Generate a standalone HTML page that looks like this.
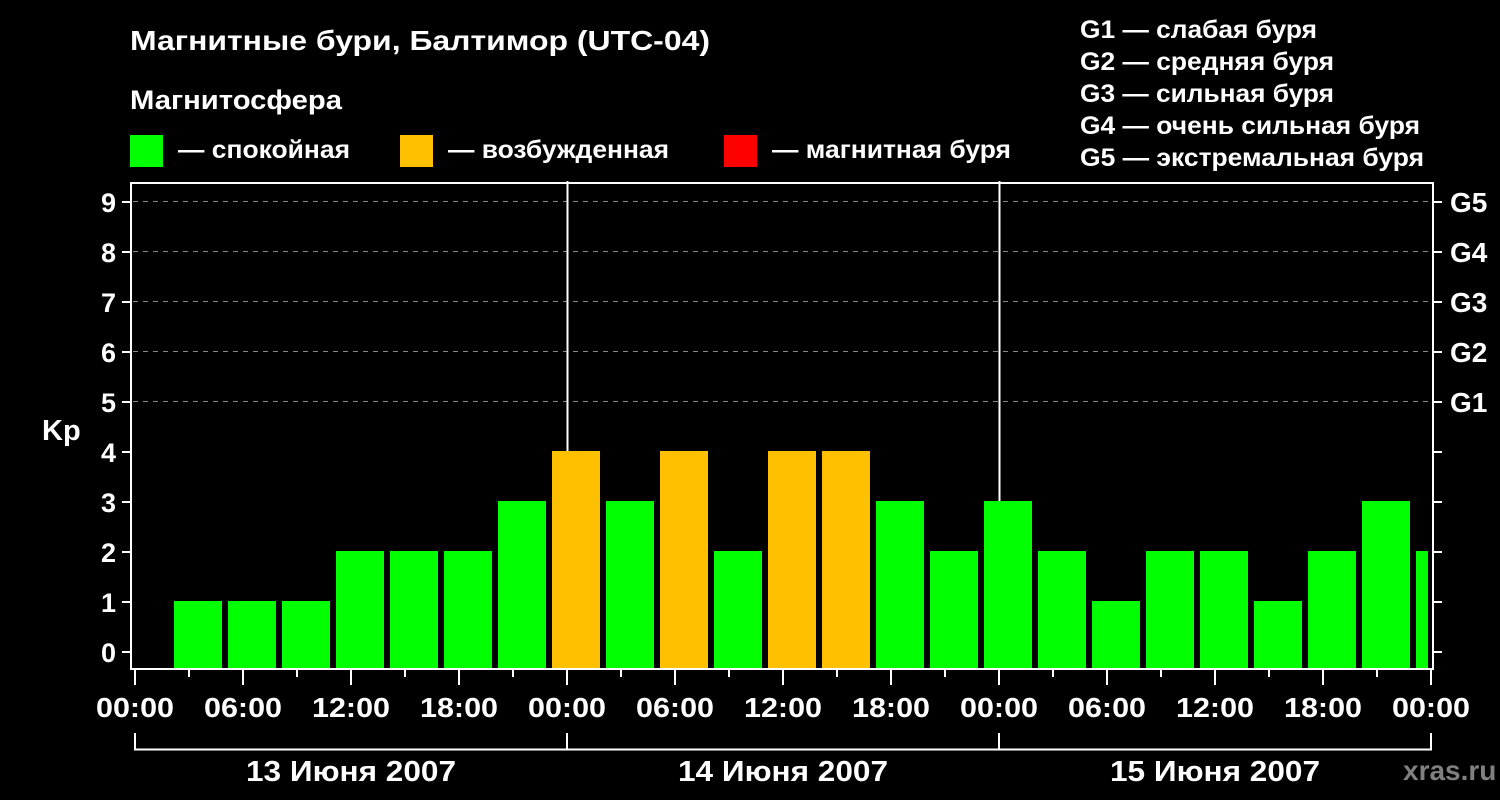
<!DOCTYPE html>
<html><head><meta charset="utf-8"><style>
html,body{margin:0;padding:0;background:#000;}
svg{display:block;}
text{font-family:"Liberation Sans","DejaVu Sans",sans-serif;font-weight:bold;fill:#fff;}
</style></head><body>
<svg width="1500" height="800" viewBox="0 0 1500 800" xmlns="http://www.w3.org/2000/svg">
<rect width="1500" height="800" fill="#000"/>
<text x="130" y="50" font-size="28" textLength="580" lengthAdjust="spacingAndGlyphs">Магнитные бури, Балтимор (UTC-04)</text>
<text x="130" y="109" font-size="27" textLength="212" lengthAdjust="spacingAndGlyphs">Магнитосфера</text>
<rect x="130" y="135" width="33" height="32" fill="#00ff00"/>
<text x="178" y="158" font-size="25" textLength="172" lengthAdjust="spacingAndGlyphs">— спокойная</text>
<rect x="400" y="135" width="33" height="32" fill="#ffc000"/>
<text x="448" y="158" font-size="25" textLength="221" lengthAdjust="spacingAndGlyphs">— возбужденная</text>
<rect x="724" y="135" width="33" height="32" fill="#ff0000"/>
<text x="772" y="158" font-size="25" textLength="239" lengthAdjust="spacingAndGlyphs">— магнитная буря</text>
<g font-size="25">
<text x="1080" y="38" textLength="237" lengthAdjust="spacingAndGlyphs">G1 — слабая буря</text>
<text x="1080" y="70" textLength="254" lengthAdjust="spacingAndGlyphs">G2 — средняя буря</text>
<text x="1080" y="102" textLength="254" lengthAdjust="spacingAndGlyphs">G3 — сильная буря</text>
<text x="1080" y="134" textLength="340" lengthAdjust="spacingAndGlyphs">G4 — очень сильная буря</text>
<text x="1080" y="166" textLength="344" lengthAdjust="spacingAndGlyphs">G5 — экстремальная буря</text>
</g>
<g stroke="#888" stroke-width="1" stroke-dasharray="5,5">
<line x1="133" y1="201.5" x2="1432" y2="201.5"/>
<line x1="133" y1="251.5" x2="1432" y2="251.5"/>
<line x1="133" y1="301.5" x2="1432" y2="301.5"/>
<line x1="133" y1="351.5" x2="1432" y2="351.5"/>
<line x1="133" y1="401.5" x2="1432" y2="401.5"/>
</g>
<line x1="567.5" y1="181" x2="567.5" y2="668" stroke="#fff" stroke-width="2"/>
<line x1="999.5" y1="181" x2="999.5" y2="668" stroke="#fff" stroke-width="2"/>
<g>
<rect x="174" y="601" width="48" height="67" fill="#00ff00"/>
<rect x="228" y="601" width="48" height="67" fill="#00ff00"/>
<rect x="282" y="601" width="48" height="67" fill="#00ff00"/>
<rect x="336" y="551" width="48" height="117" fill="#00ff00"/>
<rect x="390" y="551" width="48" height="117" fill="#00ff00"/>
<rect x="444" y="551" width="48" height="117" fill="#00ff00"/>
<rect x="498" y="501" width="48" height="167" fill="#00ff00"/>
<rect x="552" y="451" width="48" height="217" fill="#ffc000"/>
<rect x="606" y="501" width="48" height="167" fill="#00ff00"/>
<rect x="660" y="451" width="48" height="217" fill="#ffc000"/>
<rect x="714" y="551" width="48" height="117" fill="#00ff00"/>
<rect x="768" y="451" width="48" height="217" fill="#ffc000"/>
<rect x="822" y="451" width="48" height="217" fill="#ffc000"/>
<rect x="876" y="501" width="48" height="167" fill="#00ff00"/>
<rect x="930" y="551" width="48" height="117" fill="#00ff00"/>
<rect x="984" y="501" width="48" height="167" fill="#00ff00"/>
<rect x="1038" y="551" width="48" height="117" fill="#00ff00"/>
<rect x="1092" y="601" width="48" height="67" fill="#00ff00"/>
<rect x="1146" y="551" width="48" height="117" fill="#00ff00"/>
<rect x="1200" y="551" width="48" height="117" fill="#00ff00"/>
<rect x="1254" y="601" width="48" height="67" fill="#00ff00"/>
<rect x="1308" y="551" width="48" height="117" fill="#00ff00"/>
<rect x="1362" y="501" width="48" height="167" fill="#00ff00"/>
<rect x="1416" y="551" width="12" height="117" fill="#00ff00"/>
</g>
<g stroke="#fff" stroke-width="2" fill="none">
<line x1="131" y1="183" x2="131" y2="670"/>
<line x1="130" y1="183" x2="1434" y2="183"/>
<line x1="1433" y1="183" x2="1433" y2="670"/>
<line x1="130" y1="669" x2="1434" y2="669"/>
</g>
<g stroke="#fff" stroke-width="2">
<line x1="122" y1="652" x2="131" y2="652"/><line x1="122" y1="602" x2="131" y2="602"/>
<line x1="122" y1="552" x2="131" y2="552"/><line x1="122" y1="502" x2="131" y2="502"/>
<line x1="122" y1="452" x2="131" y2="452"/><line x1="122" y1="402" x2="131" y2="402"/>
<line x1="122" y1="352" x2="131" y2="352"/><line x1="122" y1="302" x2="131" y2="302"/>
<line x1="122" y1="252" x2="131" y2="252"/><line x1="122" y1="202" x2="131" y2="202"/>
<line x1="1433" y1="652" x2="1442" y2="652"/><line x1="1433" y1="602" x2="1442" y2="602"/>
<line x1="1433" y1="552" x2="1442" y2="552"/><line x1="1433" y1="502" x2="1442" y2="502"/>
<line x1="1433" y1="452" x2="1442" y2="452"/><line x1="1433" y1="402" x2="1442" y2="402"/>
<line x1="1433" y1="352" x2="1442" y2="352"/><line x1="1433" y1="302" x2="1442" y2="302"/>
<line x1="1433" y1="252" x2="1442" y2="252"/><line x1="1433" y1="202" x2="1442" y2="202"/>
</g>
<g font-size="27" text-anchor="end">
<text x="116" y="662">0</text><text x="116" y="612">1</text><text x="116" y="562">2</text>
<text x="116" y="512">3</text><text x="116" y="462">4</text><text x="116" y="412">5</text>
<text x="116" y="362">6</text><text x="116" y="312">7</text><text x="116" y="262">8</text>
<text x="116" y="212">9</text>
</g>
<text x="42" y="440" font-size="29">Kp</text>
<g font-size="28">
<text x="1450" y="212">G5</text><text x="1450" y="262">G4</text><text x="1450" y="312">G3</text>
<text x="1450" y="362">G2</text><text x="1450" y="412">G1</text>
</g>
<g stroke="#fff" stroke-width="2">
<line x1="135" y1="670" x2="135" y2="685"/><line x1="189" y1="670" x2="189" y2="677"/>
<line x1="243" y1="670" x2="243" y2="685"/><line x1="297" y1="670" x2="297" y2="677"/>
<line x1="351" y1="670" x2="351" y2="685"/><line x1="405" y1="670" x2="405" y2="677"/>
<line x1="459" y1="670" x2="459" y2="685"/><line x1="513" y1="670" x2="513" y2="677"/>
<line x1="567" y1="670" x2="567" y2="685"/><line x1="621" y1="670" x2="621" y2="677"/>
<line x1="675" y1="670" x2="675" y2="685"/><line x1="729" y1="670" x2="729" y2="677"/>
<line x1="783" y1="670" x2="783" y2="685"/><line x1="837" y1="670" x2="837" y2="677"/>
<line x1="891" y1="670" x2="891" y2="685"/><line x1="945" y1="670" x2="945" y2="677"/>
<line x1="999" y1="670" x2="999" y2="685"/><line x1="1053" y1="670" x2="1053" y2="677"/>
<line x1="1107" y1="670" x2="1107" y2="685"/><line x1="1161" y1="670" x2="1161" y2="677"/>
<line x1="1215" y1="670" x2="1215" y2="685"/><line x1="1269" y1="670" x2="1269" y2="677"/>
<line x1="1323" y1="670" x2="1323" y2="685"/><line x1="1377" y1="670" x2="1377" y2="677"/>
<line x1="1431" y1="670" x2="1431" y2="685"/>
</g>
<g font-size="28" text-anchor="middle">
<text x="135" y="717" textLength="78" lengthAdjust="spacingAndGlyphs">00:00</text>
<text x="243" y="717" textLength="78" lengthAdjust="spacingAndGlyphs">06:00</text>
<text x="351" y="717" textLength="78" lengthAdjust="spacingAndGlyphs">12:00</text>
<text x="459" y="717" textLength="78" lengthAdjust="spacingAndGlyphs">18:00</text>
<text x="567" y="717" textLength="78" lengthAdjust="spacingAndGlyphs">00:00</text>
<text x="675" y="717" textLength="78" lengthAdjust="spacingAndGlyphs">06:00</text>
<text x="783" y="717" textLength="78" lengthAdjust="spacingAndGlyphs">12:00</text>
<text x="891" y="717" textLength="78" lengthAdjust="spacingAndGlyphs">18:00</text>
<text x="999" y="717" textLength="78" lengthAdjust="spacingAndGlyphs">00:00</text>
<text x="1107" y="717" textLength="78" lengthAdjust="spacingAndGlyphs">06:00</text>
<text x="1215" y="717" textLength="78" lengthAdjust="spacingAndGlyphs">12:00</text>
<text x="1323" y="717" textLength="78" lengthAdjust="spacingAndGlyphs">18:00</text>
<text x="1431" y="717" textLength="78" lengthAdjust="spacingAndGlyphs">00:00</text>
</g>
<g stroke="#fff" stroke-width="2" fill="none">
<polyline points="135,733 135,749.5 1431,749.5 1431,733"/>
<line x1="567" y1="733" x2="567" y2="749"/>
<line x1="999" y1="733" x2="999" y2="749"/>
</g>
<g font-size="29" text-anchor="middle">
<text x="351" y="781" textLength="210" lengthAdjust="spacingAndGlyphs">13 Июня 2007</text>
<text x="783" y="781" textLength="210" lengthAdjust="spacingAndGlyphs">14 Июня 2007</text>
<text x="1215" y="781" textLength="210" lengthAdjust="spacingAndGlyphs">15 Июня 2007</text>
</g>
<text x="1403" y="780" font-size="28" style="fill:#808080">xras.ru</text>
</svg>
</body></html>
